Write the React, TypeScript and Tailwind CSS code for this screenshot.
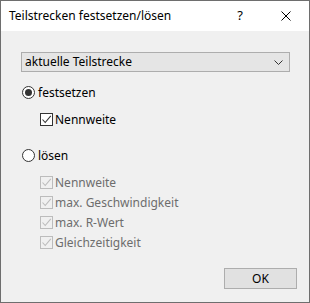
const font = { fontFamily: '"Segoe UI", "Noto Sans", sans-serif' };

const Check = ({ color }: { color: string }) => (
  <svg width="11" height="11" viewBox="0 0 11 11" className="block">
    <polyline points="1.5,5.5 4.2,8.5 9.8,1.8" fill="none" stroke={color} strokeWidth="1.1" />
  </svg>
);

const CheckBox = ({ label, disabled }: { label: string; disabled?: boolean }) => (
  <div className="flex items-center h-[13px]">
    <div
      className={`w-[13px] h-[13px] flex items-center justify-center border ${
        disabled ? 'border-[#bcbcbc] bg-[#f0f0f0]' : 'border-[#333333] bg-white'
      }`}
    >
      <Check color={disabled ? '#bcbcbc' : '#333333'} />
    </div>
    <span className={`ml-[2px] leading-none ${disabled ? 'text-[#6d6d6d]' : 'text-black'}`}>{label}</span>
  </div>
);

const Radio = ({ label, checked }: { label: string; checked?: boolean }) => (
  <div className="flex items-center h-[13px]">
    <div className="w-[13px] h-[13px] rounded-full border border-[#333333] bg-white flex items-center justify-center">
      {checked && <div className="w-[7px] h-[7px] rounded-full bg-[#333333]" />}
    </div>
    <span className="ml-[3px] leading-none text-black">{label}</span>
  </div>
);

export default function App() {
  return (
    <div className="w-[310px] h-[303px] border border-[#6e6e6e] flex flex-col text-[12px]" style={font}>
      {/* Title bar */}
      <div className="h-[30px] bg-white flex items-center">
        <span className="pl-2 flex-1 text-black">Teilstrecken festsetzen/lösen</span>
        <div className="w-[46px] h-full flex items-center justify-center text-[13px] text-black">?</div>
        <div className="w-[46px] h-full flex items-center justify-center">
          <svg width="10" height="10" viewBox="0 0 10 10">
            <path d="M0.5 0.5 L9.5 9.5 M9.5 0.5 L0.5 9.5" stroke="#000" strokeWidth="1" />
          </svg>
        </div>
      </div>

      {/* Body */}
      <div className="flex-1 bg-[#f0f0f0] flex flex-col pl-5 pr-[19px] pt-[21px]">
        <div className="h-[20px] border border-[#adadad] bg-[#e5e5e5] flex items-center pl-[3px] pr-[6px]">
          <span className="flex-1 text-black">aktuelle Teilstrecke</span>
          <svg width="9" height="5" viewBox="0 0 9 5">
            <polyline points="0.5,0.5 4.5,4.5 8.5,0.5" fill="none" stroke="#333" strokeWidth="1" />
          </svg>
        </div>

        <div className="mt-[14px] ml-px">
          <Radio label="festsetzen" checked />
        </div>
        <div className="mt-[14px] ml-[19px]">
          <CheckBox label="Nennweite" />
        </div>

        <div className="mt-[23px] ml-px">
          <Radio label="lösen" />
        </div>
        <div className="mt-[14px] ml-[19px] flex flex-col gap-[7px]">
          <CheckBox label="Nennweite" disabled />
          <CheckBox label="max. Geschwindigkeit" disabled />
          <CheckBox label="max. R-Wert" disabled />
          <CheckBox label="Gleichzeitigkeit" disabled />
        </div>

        <div className="mt-auto mb-[13px] -mr-[7px] self-end">
          <button className="w-[73px] h-[21px] border border-[#adadad] bg-[#e1e1e1] text-black leading-none">OK</button>
        </div>
      </div>
    </div>
  );
}
